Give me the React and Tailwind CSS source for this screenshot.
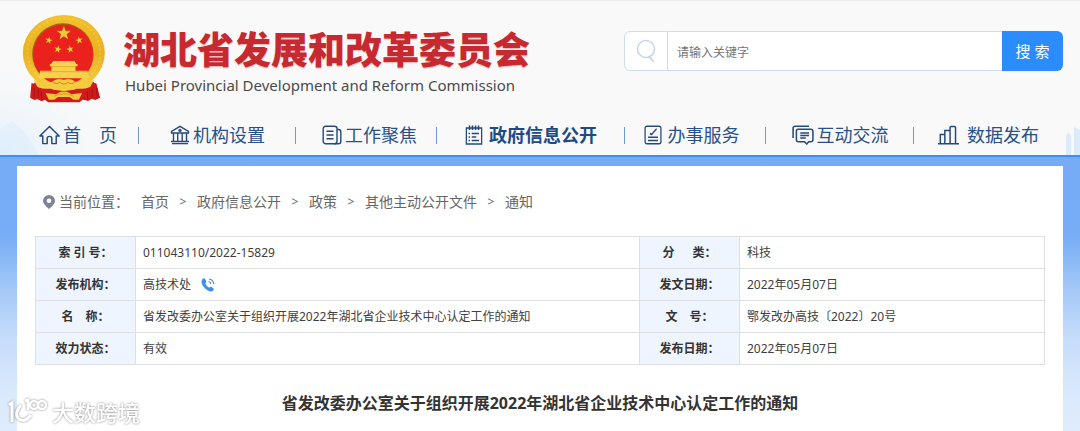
import React from 'react'

const NAV_FONT = "font-['Noto_Sans','Noto_Sans_CJK_SC',sans-serif]"

const Emblem = () => (
  <svg viewBox="22 14 248 264" className="w-[83px] h-[88px] shrink-0" role="img" aria-label="国徽">
    <defs>
      <linearGradient id="gold" x1="0" y1="0" x2="0" y2="1">
        <stop offset="0" stopColor="#f3c02c" />
        <stop offset="0.5" stopColor="#e9b020" />
        <stop offset="1" stopColor="#f8cf45" />
      </linearGradient>
      <path id="star" d="M0-10 2.4-3.2 9.5-3.1 3.8 1.3 5.9 8.1 0 4-5.9 8.1-3.8 1.3-9.5-3.1-2.4-3.2Z" />
    </defs>
    <path d="M62 214 52 226 48 262 58 268 68 266 80 272 90 268 100 276H194L206 266 220 271 230 265 242 268 254 262 246 226 236 214Z" fill="#cf1a1c" />
    <path d="M60 238V262M70 238V262M80 240V268M242 238V262M230 238V262M218 240V268" stroke="#a51315" strokeWidth="3" />
    <ellipse cx="147" cy="128" rx="123" ry="114" fill="url(#gold)" />
    <ellipse cx="147" cy="126" rx="109" ry="102" fill="none" stroke="#f9dc66" strokeWidth="6" strokeDasharray="7 6" opacity="0.35" />
    <path d="M50 218 62 222 90 240V268L80 272 68 266 58 268 46 262ZM244 218 232 222 204 240V268L220 271 230 265 242 268 256 262Z" fill="#cf1a1c" />
    <path d="M58 232V262M70 236V262M80 244V266M246 232V262M232 236V262M218 244V266" stroke="#a51315" strokeWidth="3" />
    <circle cx="144" cy="131" r="92" fill="#a5610f" />
    <circle cx="145" cy="133" r="90" fill="#ea211c" />
    <g fill="#f4c63c" stroke="#8f3a10" strokeWidth="0.5">
      <use href="#star" transform="translate(147 69) scale(2.4)" />
      <use href="#star" transform="translate(102 90) scale(1.25) rotate(12)" />
      <use href="#star" transform="translate(193 90) scale(1.25) rotate(-12)" />
      <use href="#star" transform="translate(129 117) scale(1.25) rotate(15)" />
      <use href="#star" transform="translate(166 117) scale(1.25) rotate(-15)" />
    </g>
    <path d="M115 152H179L184 161H188V168H182V181H218L222 204H72L76 181H110V168H105V161H109Z" fill="#f6d24d" />
    <path d="M108 169H184M78 184H218" stroke="#d99a25" strokeWidth="2" />
    <path d="M56 208Q84 226 112 214 128 201 147 209 166 201 182 214 210 226 238 208L226 230Q200 240 183 232 176 244 165 236 147 246 129 236 118 244 111 232 94 240 68 230Z" fill="#f5cc40" />
    <path d="M112 214Q124 224 135 216 147 226 159 216 170 224 182 214" fill="none" stroke="#c98a1c" strokeWidth="3" />
    <path d="M72 232Q100 246 122 242L147 248 172 242Q196 246 222 232L196 262Q170 258 147 272 124 258 98 262Z" fill="#d21b1c" />
    <path d="M92 248 124 252Q136 242 147 244 158 242 170 252L202 248 192 268H176L164 260H130L118 268H102Z" fill="#f3c73a" />
    <path d="M118 258Q147 242 176 258" fill="none" stroke="#c98a1c" strokeWidth="2" />
  </svg>
)

const NavSvg = ({ width = 'w-5', children }) => (
  <svg
    viewBox="0 0 20 20"
    className={`${width} h-5 shrink-0`}
    fill="none"
    stroke="#24497a"
    strokeWidth="1.4"
    preserveAspectRatio="none"
    aria-hidden="true"
  >
    {children}
  </svg>
)

const HomeIcon = () => (
  <NavSvg width="w-[21px]">
    <path d="M.8 11 10 1.6l9.200 9.400H16.400v7.600h-4.200v-5.200q0-2-2.200-2t-2.200 2v5.200H3.600V11Z" strokeLinejoin="round" />
  </NavSvg>
)

const BankIcon = () => (
  <NavSvg>
    <path d="M1.5 8V6.4L10 1.4l8.500 5V8ZM2 18.600h16M1 16.500h18M3.500 8v8.500M7.700 8v8.500M12.200 8v8.500M16.500 8v8.500" />
    <circle cx="10" cy="5.400" r="1" />
  </NavSvg>
)

const NewsIcon = () => (
  <NavSvg>
    <rect x="1.2" y="1.200" width="13.800" height="17.600" rx="2.500" />
    <path d="M15 4.500h1.500Q18.800 4.500 18.800 7v9.500Q18.800 18.800 16.500 18.800H12M4.500 6.300h7M4.500 10h7M4.500 13.700h7" />
  </NavSvg>
)

const ListIcon = () => (
  <NavSvg width="w-[18px]">
    <path d="M1.500 3h17v16h-17Z" />
    <path d="M5 .5v4.500M8.300.5v4.500M11.700.5v4.500M15 .5v4.500M7.500 8.500H15.500M7.500 12H12.500M7.500 15.500H15.500M4 8.500h1.600M4 12h1.600M4 15.500h1.600" strokeWidth="1.700" />
  </NavSvg>
)

const FormIcon = () => (
  <NavSvg width="w-[18px]">
    <rect x="1.200" y="1.200" width="17.600" height="17.600" rx="2" />
    <path d="M6.500 8.500l2 1M8 10 14 3.800M4.500 12.300h11M4.500 15.500h11" />
  </NavSvg>
)

const ChatIcon = () => (
  <NavSvg width="w-[22px]">
    <path d="M1 13V3.200Q1 1.200 3 1.200h12.500" />
    <path d="M5.500 4.200h11.500q2 0 2 2v8.500q0 2-2 2h-1.800L13.500 19l-2.200-2.300H6q-2 0-2-2V6.200q0-2 1.500-2ZM7.500 8h8M7.500 10.500h8M7.500 13h5" />
  </NavSvg>
)

const ChartIcon = () => (
  <NavSvg width="w-[21px]">
    <path d="M0 18.700h20M2.200 18.700V9.500h4.300M6.500 18.700V5.500h5M11.500 18.700V2.500q0-1 1-1h3.200q1 0 1 1v16.200" />
  </NavSvg>
)

const navItems = [
  { icon: HomeIcon, label: '首　页', gap: 'gap-[3px]' },
  { icon: BankIcon, label: '机构设置', gap: 'gap-[3px]' },
  { icon: NewsIcon, label: '工作聚焦', gap: 'gap-[3px]', pad: 'pl-1.5' },
  { icon: ListIcon, label: '政府信息公开', gap: 'gap-1.5', active: true },
  { icon: FormIcon, label: '办事服务', gap: 'gap-1.5', pad: 'pr-2' },
  { icon: ChatIcon, label: '互动交流', gap: 'gap-[3px]' },
  { icon: ChartIcon, label: '数据发布', gap: 'gap-2' },
]

const crumbs = ['首页', '政府信息公开', '政策', '其他主动公开文件', '通知']

const PhoneIcon = () => (
  <svg viewBox="0 0 14 14" className="w-3.5 h-3.5" aria-hidden="true">
    <path
      d="M3.800.6Q2.800-.2 1.800.8-.2 2.800 1 6 3 11 8.500 13.300q2.300.7 3.800-.9.900-1 .1-1.900L10.700 9Q9.800 8.300 9 9L8.200 9.700Q5.500 8.500 4.200 5.600L5 4.700q.6-.8.100-1.700Z"
      fill="#3f8fe6"
    />
    <path d="M7.500 3.500Q9.500 3.800 10 6M8 1q4 .5 4.800 4.800" fill="none" stroke="#3f8fe6" strokeWidth="1.200" />
  </svg>
)

const rows = [
  ['索 引 号：', '011043110/2022-15829', '分　  类：', '科技'],
  ['发布机构：', '高技术处', '发文日期：', '2022年05月07日'],
  ['名　称：', '省发改委办公室关于组织开展2022年湖北省企业技术中心认定工作的通知', '文　号：', '鄂发改办高技〔2022〕20号'],
  ['效力状态：', '有效', '发布日期：', '2022年05月07日'],
]

const Header = () => (
  <header className="relative bg-[#f9f9f9] border-t border-[#ececec]">
    <svg className="absolute left-0 bottom-0.5 w-[140px] h-[110px]" viewBox="0 0 140 110" aria-hidden="true">
      <defs>
        <radialGradient id="haze" cx="0" cy="1" r="1">
          <stop offset="0" stopColor="#e3f0fd" />
          <stop offset="1" stopColor="#f9f9f9" stopOpacity="0" />
        </radialGradient>
      </defs>
      <path d="M0 0H140V110H0Z" fill="url(#haze)" />
      <path d="M0 84 12 76 22 84 40 110H0Z" fill="#dcecfb" opacity="0.5" />
    </svg>
    <svg className="absolute right-0 bottom-0.5 w-4 h-7" viewBox="0 0 16 28" aria-hidden="true">
      <path d="M2 28V9L4.500 5 7 9V28ZM10 28V0L16 3V28Z" fill="#dcebfb" />
    </svg>
    <div className="relative flex items-start justify-between pl-[22px] pr-[17px] pt-3.5">
      <div className="flex">
        <Emblem />
        <div className="ml-[18px] pt-3">
          <h1 className="text-[37px] leading-[42px] font-black text-[#c62a30] whitespace-nowrap font-['Noto_Sans_CJK_SC',sans-serif] [text-shadow:0_1px_1px_#f3b5b5]">
            湖北省发展和改革委员会
          </h1>
          <p className="mt-1 pl-0.5 text-[15px] leading-6 text-[#4a4a4a] whitespace-nowrap font-['Noto_Sans',sans-serif]">
            Hubei Provincial Development and Reform Commission
          </p>
        </div>
      </div>
      <form className="mt-4 flex h-10 w-[439px]" onSubmit={(e) => e.preventDefault()}>
        <label
          htmlFor="keyword"
          className="flex w-[44px] items-center justify-center rounded-l-md border border-[#cfdcea] bg-white"
        >
          <svg viewBox="0 0 20 24" className="w-5 h-6" fill="none" stroke="#c5d6ea" aria-label="关键字">
            <circle cx="10" cy="10" r="8.500" strokeWidth="1.500" />
            <path d="M13.500 17.500 17 22" strokeWidth="2" strokeLinecap="round" />
          </svg>
        </label>
        <input
          id="keyword"
          type="text"
          placeholder="请输入关键字"
          className="min-w-0 flex-1 border-y border-[#cfdcea] bg-white px-[9px] pt-1 text-[12px] text-[#555] placeholder-[#757575] focus:outline-none"
        />
        <button type="submit" className="w-[61px] rounded-r-md bg-[#2b8cff] text-[15px] text-white">
          搜 索
        </button>
      </form>
    </div>
    <nav className={`relative mt-3 px-[17px] ${NAV_FONT}`}>
      <ul className="grid grid-cols-[122fr_157fr_141fr_188fr_141fr_148fr_149fr]">
        {navItems.map(({ icon: Icon, label, gap, pad = '', active }, i) => (
          <li key={label} className="relative flex h-10 justify-center">
            <a
              href="#"
              className={`flex items-center ${gap} ${pad} text-[18px] leading-6 whitespace-nowrap ${
                active ? 'font-bold text-[#1c4a86]' : 'text-[#27518a]'
              }`}
            >
              <Icon />
              {label}
            </a>
            {i < navItems.length - 1 && <span className="absolute right-0 top-3 h-[17px] w-px bg-[#6f9bd0]" />}
          </li>
        ))}
      </ul>
    </nav>
    <div className="h-0.5 bg-[#3f8ef5]" />
  </header>
)

const InfoTable = () => (
  <table className="mx-auto w-full table-fixed border-collapse text-[12px] text-[#404040]">
    <colgroup>
      <col className="w-[100px]" />
      <col />
      <col className="w-[100px]" />
      <col className="w-[305px]" />
    </colgroup>
    <tbody>
      {rows.map(([k1, v1, k2, v2]) => (
        <tr key={k1} className="h-8">
          <th scope="row" className="border border-[#dedfe2] bg-[#eef5ff] font-bold text-[#333] whitespace-pre">
            {k1}
          </th>
          <td className="border border-[#dedfe2] px-[7px]">
            <span className="flex items-center gap-2.5">
              {v1}
              {v1 === '高技术处' && <PhoneIcon />}
            </span>
          </td>
          <th scope="row" className="border border-[#dedfe2] bg-[#eef5ff] font-bold text-[#333] whitespace-pre">
            {k2}
          </th>
          <td className="border border-[#dedfe2] px-[7px]">{v2}</td>
        </tr>
      ))}
    </tbody>
  </table>
)

const Watermark = () => (
  <div className="absolute bottom-1.5 left-2 flex items-center gap-1 [filter:drop-shadow(0_0_1px_#888)]">
    <svg viewBox="0 0 40 28" className="w-10 h-7" fill="none" stroke="#fff" strokeWidth="3" aria-hidden="true">
      <path d="M1 8 4 6V25" />
      <path d="M13 8Q6 16 10 21 16 27 23 18" />
      <path d="M17 4 20 3V13" />
      <circle cx="26" cy="8" r="4" strokeWidth="2.500" />
      <circle cx="34" cy="8" r="4" strokeWidth="2.500" />
    </svg>
    <span className="text-[22px] leading-7 font-medium text-white font-['Noto_Sans_CJK_SC',sans-serif]">大数跨境</span>
  </div>
)

export default function App() {
  return (
    <div className="relative flex min-h-screen flex-col bg-[linear-gradient(to_bottom,#73abf5_0px,#76adf5_235px,#a0c6f8_285px,#c4dbfa_335px,#d9e9fc_390px,#dfecfd_431px)] font-['Noto_Sans','Noto_Sans_CJK_SC',sans-serif]">
      <Header />
      <main className="mx-[17px] mt-[9px] flex-1 bg-white px-[18px] pt-6">
        <nav className="flex items-center pl-2 text-[14px] leading-6 text-[#666]" aria-label="当前位置">
          <svg viewBox="0 0 12 14" className="mr-1 w-3 h-3.5" aria-hidden="true">
            <path d="M6 0a6 6 0 0 1 6 6q0 3-6 8-6-5-6-8a6 6 0 0 1 6-6Z" fill="#7c8298" />
            <circle cx="6" cy="5.800" r="2.300" fill="#fff" />
          </svg>
          <span className="mr-3">当前位置：</span>
          {crumbs.map((crumb, i) => (
            <React.Fragment key={crumb}>
              {i > 0 && <span className="w-7 text-center text-[12px]">&gt;</span>}
              <a href="#">{crumb}</a>
            </React.Fragment>
          ))}
        </nav>
        <div className="mt-[22px]">
          <InfoTable />
        </div>
        <h2 className="mt-6 text-center text-[16px] leading-7 font-bold text-[#333]">
          省发改委办公室关于组织开展2022年湖北省企业技术中心认定工作的通知
        </h2>
      </main>
      <Watermark />
    </div>
  )
}
